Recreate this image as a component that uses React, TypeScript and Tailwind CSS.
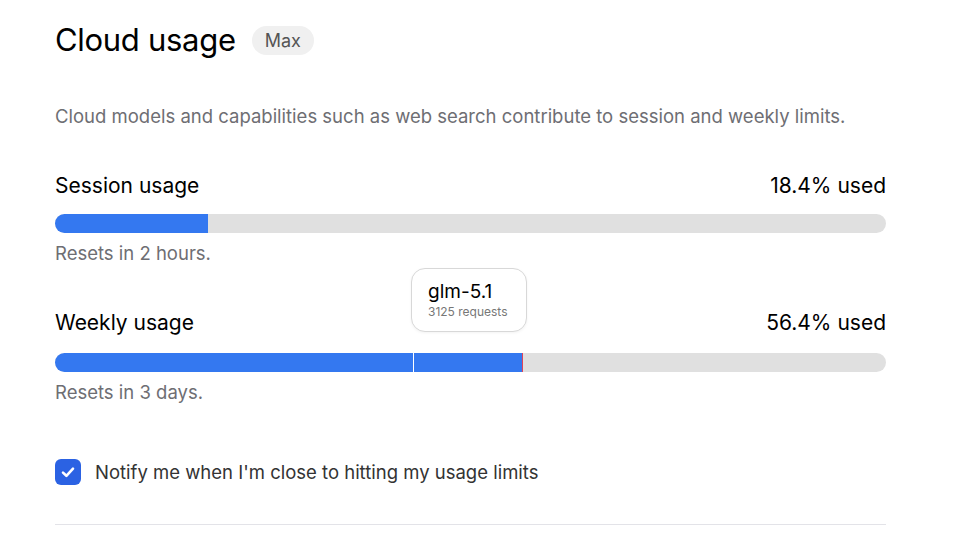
import * as React from "react";

type Segment = { pct: number };

function UsageBar({ segments, marker }: { segments: Segment[]; marker?: number }) {
  return (
    <div className="relative flex h-[19px] w-full overflow-hidden rounded-full bg-[#e0e0e0]">
      {segments.map((s, i) => (
        <div
          key={i}
          className={`h-full bg-[#3478f0] ${i < segments.length - 1 ? "border-r border-white" : ""}`}
          style={{ width: `${s.pct}%` }}
        />
      ))}
      {marker !== undefined && (
        <div className="absolute top-0 h-full w-px bg-[#e0455a]" style={{ left: `${marker}%` }} />
      )}
    </div>
  );
}

function UsageRow({
  label,
  used,
  reset,
  barGap,
  children,
}: {
  label: string;
  used: string;
  reset: string;
  barGap: string;
  children: React.ReactNode;
}) {
  return (
    <section className="relative">
      <div className="flex items-center justify-between text-[21px] leading-[28px] text-black">
        <span>{label}</span>
        <span>{used}</span>
      </div>
      <div className={barGap}>{children}</div>
      <p className="mt-[7px] text-[18.5px] leading-[26px] text-[#6e6e73]">{reset}</p>
    </section>
  );
}

export default function App() {
  return (
    <main
      className="min-h-[541px] bg-white pl-[55px] pr-[72px] pt-[20px]"
      style={{ fontFamily: "Inter, 'Noto Sans', sans-serif" }}
    >
      <header className="flex items-center gap-[16px]">
        <h1 className="text-[31px] font-normal leading-[40px] tracking-[-0.3px] text-black">Cloud usage</h1>
        <span className="rounded-full bg-[#f0f0f0] px-[13px] py-[3px] text-[18px] leading-[23px] text-[#555]">
          Max
        </span>
      </header>

      <p className="mt-[43px] text-[18.5px] leading-[26px] text-[#6e6e73]">
        Cloud models and capabilities such as web search contribute to session and weekly limits.
      </p>

      <div className="mt-[43px]">
        <UsageRow label="Session usage" used="18.4% used" reset="Resets in 2 hours." barGap="mt-[14px]">
          <UsageBar segments={[{ pct: 18.4 }]} />
        </UsageRow>
      </div>

      <div className="mt-[43px]">
        <UsageRow label="Weekly usage" used="56.4% used" reset="Resets in 3 days." barGap="mt-[16px]">
          <div className="relative">
            <UsageBar segments={[{ pct: 43.2 }, { pct: 13.0 }]} marker={56.2} />
            <div className="absolute left-[356px] top-[-85px] flex h-[64px] w-[116px] flex-col justify-center rounded-[14px] border border-[#d8d8d8] bg-white pl-[16px] pt-[1px] shadow-[0_1px_3px_rgba(0,0,0,0.05)]">
              <span className="text-[19px] leading-[22px] text-black">glm-5.1</span>
              <span className="text-[12px] leading-[18px] text-[#777]">3125 requests</span>
            </div>
          </div>
        </UsageRow>
      </div>

      <label className="mt-[54px] flex items-center gap-[14px]">
        <span className="flex h-[26px] w-[26px] items-center justify-center rounded-[6px] bg-[#2b62e3]">
          <svg width="16" height="16" viewBox="0 0 16 16" fill="none">
            <path d="M3 8.6 6.4 11.8 13 4.6" stroke="white" strokeWidth="2.6" strokeLinecap="round" strokeLinejoin="round" />
          </svg>
        </span>
        <span className="text-[18.5px] leading-[26px] text-[#333]">
          Notify me when I'm close to hitting my usage limits
        </span>
      </label>

      <hr className="mt-[39px] border-t border-[#e3e3e8]" />
    </main>
  );
}
